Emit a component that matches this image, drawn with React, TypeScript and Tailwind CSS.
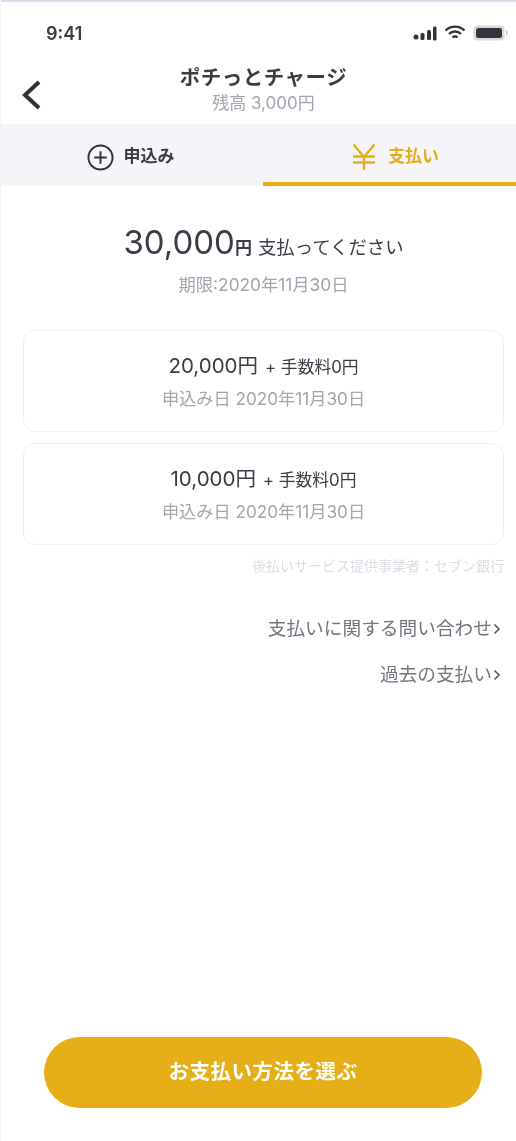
import React from "react";

const F = { fontFamily: '"Inter","Noto Sans CJK JP",sans-serif' };

function Card({ amount }: { amount: string }) {
  return (
    <div className="h-[102px] rounded-[12px] border border-[#eeeff5] flex flex-col items-center pt-[20px]">
      <div className="flex items-baseline h-[30px] text-[#3a3c46]">
        <span className="text-[20.500px] leading-[30px]">{amount}</span>
        <span className="text-[16.800px] leading-[30px] ml-[7px]">+ 手数料0円</span>
      </div>
      <div className="mt-[6px] text-[17.200px] leading-[24px] text-[#a3a5af]">申込み日 2020年11月30日</div>
    </div>
  );
}

function LinkRow({ text }: { text: string }) {
  return (
    <div className="flex items-center justify-end h-[24px] text-[#73757f] text-[18.700px] leading-[24px]">
      <span>{text}</span>
      <svg width="8" height="12" viewBox="0 0 8 12" className="ml-[1px] mr-[3px]" fill="none" stroke="#55575f" strokeWidth="1.6">
        <path d="M1.500 1.500 6 6l-4.500 4.500" />
      </svg>
    </div>
  );
}

export default function App() {
  return (
    <div style={F} className="w-[516px] h-[1141px] bg-white flex flex-col overflow-hidden border-l border-[#f4f4f6] blur-[0.6px]">
      <div className="h-[2px] bg-[#d9dcee] -ml-[1px] shrink-0" />
      <div className="h-[54px] shrink-0 flex items-center justify-between pl-[45px] pr-[8px] pt-[8px]">
        <span className="text-[18px] font-semibold text-[#3a3c46]">9:41</span>
        <div className="flex items-center gap-[7px] -mr-[1px]">
          <svg width="24" height="15" viewBox="0 0 24 15" fill="#33353d">
            <circle cx="3" cy="11" r="2.500" />
            <rect x="7.500" y="7" width="4" height="7" rx="1.500" />
            <rect x="14" y="4" width="4" height="10" rx="1.500" />
            <rect x="20" y="0.500" width="3.500" height="14" rx="1.200" />
          </svg>
          <svg width="22" height="16" viewBox="0 0 22 16" fill="none" stroke="#33353d" strokeWidth="2.400">
            <path d="M1.500 5.500a13.500 13.500 0 0 1 19 0" />
            <path d="M5 9a8.500 8.500 0 0 1 12 0" />
            <path d="M8.500 12.500a3.500 3.500 0 0 1 5 0" />
          </svg>
          <svg width="36" height="16" viewBox="0 0 36 16">
            <rect x="0.500" y="0.500" width="31" height="15" rx="4" fill="#d9d9dd" />
            <rect x="3" y="3" width="26" height="10" rx="2.500" fill="#33353d" />
            <rect x="33" y="5.500" width="1.500" height="5" rx="0.700" fill="#c4c4c8" />
          </svg>
        </div>
      </div>
      <div className="h-[68px] shrink-0 relative flex flex-col items-center pt-[7px] pl-[10px]">
        <div className="text-[20.500px] leading-[30px] font-bold text-[#3a3c46] tracking-[0.5px]">ポチっとチャージ</div>
        <div className="text-[17px] leading-[20px] text-[#a3a5af]">残高 3,000円</div>
        <svg className="absolute left-[21px] top-[24px]" width="20" height="30" viewBox="0 0 20 30" fill="none" stroke="#30323a" strokeWidth="4">
          <path d="M17 2 3 15l14 13" />
        </svg>
      </div>
      <div className="h-[62px] shrink-0 flex bg-[#f4f4f9]">
        <div className="w-[262px] flex items-center justify-center gap-[10px] pt-[4px] pr-[3px]">
          <svg width="27" height="27" viewBox="0 0 28 28" fill="none" stroke="#30323a" strokeWidth="2">
            <circle cx="14" cy="14" r="12.500" />
            <path d="M14 7.500v13M7.500 14h13" />
          </svg>
          <span className="text-[17px] font-bold text-[#3a3c46]">申込み</span>
        </div>
        <div className="flex-1 flex items-center justify-center gap-[12px] border-b-[4px] border-[#e6ae17] pl-[12px] pt-[7px]">
          <svg width="24" height="28" viewBox="0 0 24 28" fill="none" stroke="#e6ae17" strokeWidth="2.400">
            <path d="M1.500 1.500 12 14 22.500 1.500M12 14v13M1 13.500h22M1 19.500h22" />
          </svg>
          <span className="text-[17px] font-bold text-[#e6ae17]">支払い</span>
        </div>
      </div>
      <div className="flex-1 flex flex-col pl-[22px] pr-[12px]">
        <div className="mt-[32px] flex items-baseline justify-center h-[48px] text-[#3a3c46]">
          <span className="text-[33px] leading-[48px]">30,000</span>
          <span className="text-[17px] font-bold leading-[48px]">円</span>
          <span className="text-[18.400px] leading-[48px] ml-[6px]">支払ってください</span>
        </div>
        <div className="text-center text-[17.300px] leading-[24px] text-[#a3a5af] mt-[7px]">期限:2020年11月30日</div>
        <div className="mt-[33px] flex flex-col gap-[11px]">
          <Card amount="20,000円" />
          <Card amount="10,000円" />
        </div>
        <div className="mt-[11px] text-right text-[14px] leading-[20px] text-[#dcdde3]">後払いサービス提供事業者：セブン銀行</div>
        <div className="mt-[41px] flex flex-col gap-[22px]">
          <LinkRow text="支払いに関する問い合わせ" />
          <LinkRow text="過去の支払い" />
        </div>
        <div className="flex-1" />
        <div className="ml-[21px] mr-[22px] mb-[33px] h-[71px] rounded-full bg-[#e6ae17] flex items-center justify-center text-white text-[20.500px] font-bold tracking-[0.5px]">お支払い方法を選ぶ</div>
      </div>
    </div>
  );
}
